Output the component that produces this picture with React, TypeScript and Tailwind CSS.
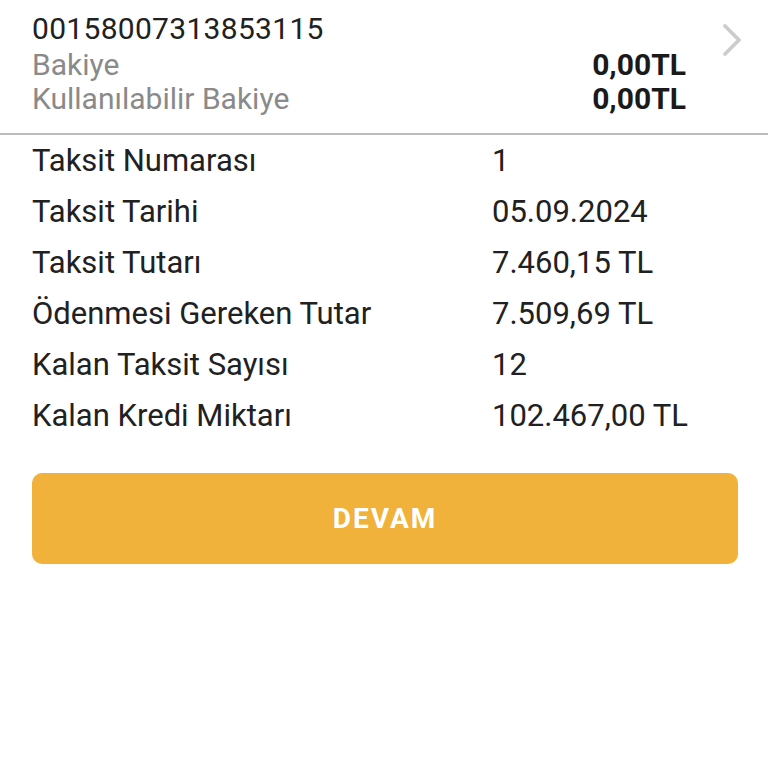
import React from 'react';

const rows: [string, string][] = [
  ['Taksit Numarası', '1'],
  ['Taksit Tarihi', '05.09.2024'],
  ['Taksit Tutarı', '7.460,15 TL'],
  ['Ödenmesi Gereken Tutar', '7.509,69 TL'],
  ['Kalan Taksit Sayısı', '12'],
  ['Kalan Kredi Miktarı', '102.467,00 TL'],
];

export default function App() {
  return (
    <div className="min-h-screen w-full bg-white font-['Roboto',sans-serif] text-[#212121]">
      {/* Account header */}
      <div className="flex border-b-2 border-[#bdbdbd] pt-[10px] pb-[18px]">
        <div className="flex-1 pl-[32px]">
          <div className="text-[30px] leading-[37px] tracking-[0.3px]">00158007313853115</div>
          <div className="flex justify-between text-[30px] leading-[35px]">
            <span className="text-[#8a8a8a]">Bakiye</span>
            <span className="font-bold text-[#1a1a1a]">0,00TL</span>
          </div>
          <div className="flex justify-between text-[30px] leading-[33px]">
            <span className="text-[#8a8a8a]">Kullanılabilir Bakiye</span>
            <span className="font-bold text-[#1a1a1a]">0,00TL</span>
          </div>
        </div>
        <div className="w-[82px] pl-[35px] pt-[13px]">
          <svg width="22" height="34" viewBox="0 0 22 34" fill="none">
            <path d="M4 3 L18 17 L4 31" stroke="#cccccc" strokeWidth="3.8" strokeLinecap="round" strokeLinejoin="round" />
          </svg>
        </div>
      </div>

      {/* Installment details */}
      <div className="px-[32px]">
        {rows.map(([label, value]) => (
          <div key={label} className="grid h-[51px] grid-cols-[460px_1fr] items-center text-[31px] leading-[51px]">
            <span>{label}</span>
            <span>{value}</span>
          </div>
        ))}

        <button className="mt-[32px] flex h-[91px] w-[706px] items-center justify-center rounded-[10px] bg-[#f0b23b] text-[28px] font-bold tracking-[2px] text-white">
          DEVAM
        </button>
      </div>
    </div>
  );
}
